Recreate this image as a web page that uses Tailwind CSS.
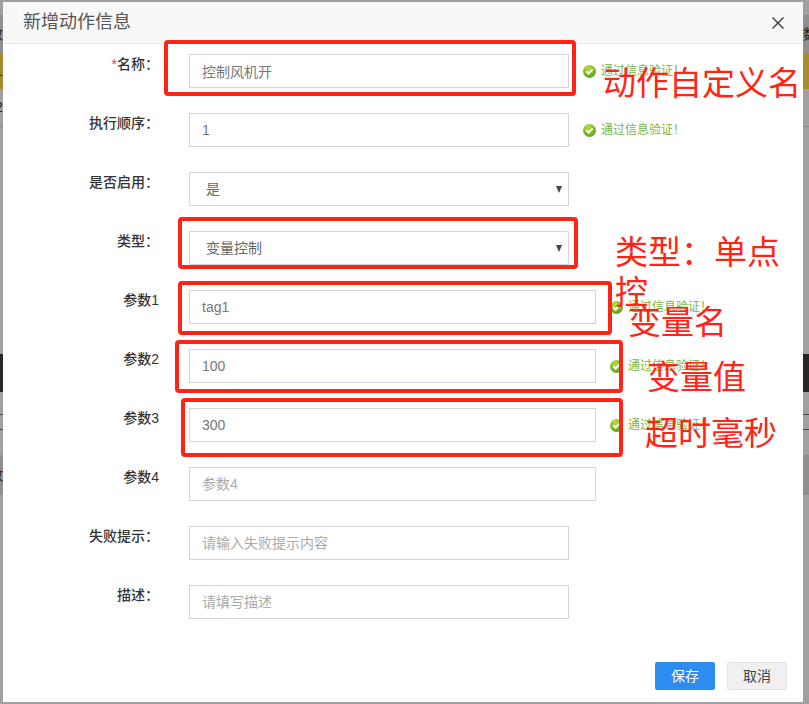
<!DOCTYPE html>
<html lang="zh-CN">
  <head>
    <meta charset="UTF-8" />
    <title>新增动作信息</title>
    <script src="https://cdn.jsdelivr.net/npm/@tailwindcss/browser@4"></script>
  </head>
  <body class="relative w-[809px] h-[704px] overflow-hidden bg-[#a0a0a0] font-['Liberation_Sans','Noto_Sans_CJK_SC',sans-serif]">
    <!-- page behind the overlay, only the edges show -->
    <div class="absolute left-0 top-[15px] w-full h-[38px] bg-[#8f8f8f]"></div>
    <div class="absolute left-0 top-[53px] w-full h-[36px] bg-[#a98a2c]"></div>
    <div class="absolute left-0 top-[126px] w-full h-px bg-[#8a8a8a]"></div>
    <div class="absolute left-0 top-[354px] w-full h-[38px] bg-[#262626]"></div>
    <div class="absolute left-0 top-[414px] w-full h-px bg-[#4a4a4a]"></div>
    <div class="absolute left-0 top-[429px] w-full h-px bg-[#4a4a4a]"></div>
    <div class="absolute left-0 top-[455px] w-full h-[40px] bg-[#8f8f8f]"></div>
    <span class="absolute left-[-11px] top-[24px] text-[14px] leading-5 text-[#222]">数</span>
    <span class="absolute left-[803px] top-[24px] text-[14px] leading-5 text-[#222]">数</span>
    <span class="absolute left-[-5px] top-[61px] text-[14px] leading-5 text-[#222]">1</span>
    <span class="absolute left-[-5px] top-[97px] text-[14px] leading-5 text-[#222]">2</span>
    <span class="absolute left-[-11px] top-[465px] text-[14px] leading-5 text-[#222]">数</span>

    <div class="relative ml-[3px] mt-[2px] w-[800px] h-[700px] bg-white">
      <header class="flex items-center justify-between h-[42px] pl-[20px] pr-[19px] bg-[#f8f8f8] border-b border-[#e8e8e8]">
        <h1 class="text-[18px] text-[#555]">新增动作信息</h1>
        <svg class="w-[12px] h-[12px]" viewBox="0 0 12 12" fill="none" stroke="#333" stroke-width="1.3"><path d="M0.5 0.5 11.5 11.5M11.5 0.5 0.5 11.5" /></svg>
      </header>

      <form class="pt-[10px] text-[14px]">
        <div class="flex h-[59px]">
          <label class="w-[156px] mr-[30px] text-right leading-5 font-medium text-[#333]"><span class="text-red-500">*</span>名称：</label>
          <input class="w-[380px] h-[34px] px-3 border border-[#d2d5dd] text-[#777]" value="控制风机开" />
          <div class="flex items-center h-[34px] ml-[14px] gap-[5px] text-[12px] text-[#7ab648]">
            <svg class="w-[13px] h-[13px]" viewBox="0 0 13 13"><defs><radialGradient id="ok" cx="0.4" cy="0.25" r="0.8"><stop offset="0" stop-color="#b4e03c" /><stop offset="1" stop-color="#5a9e1e" /></radialGradient></defs><circle cx="6.5" cy="6.5" r="6.5" fill="url(#ok)" /><path d="M3.4 6.3 5.6 8.5 9.6 4.4" fill="none" stroke="#fff" stroke-width="2" /></svg>
            <span>通过信息验证！</span>
          </div>
        </div>
        <div class="flex h-[59px]">
          <label class="w-[156px] mr-[30px] text-right leading-5 font-medium text-[#333]">执行顺序：</label>
          <input class="w-[380px] h-[34px] px-3 border border-[#d2d5dd] text-[#777]" value="1" />
          <div class="flex items-center h-[34px] ml-[14px] gap-[5px] text-[12px] text-[#7ab648]">
            <svg class="w-[13px] h-[13px]" viewBox="0 0 13 13"><circle cx="6.5" cy="6.5" r="6.5" fill="url(#ok)" /><path d="M3.4 6.3 5.6 8.5 9.6 4.4" fill="none" stroke="#fff" stroke-width="2" /></svg>
            <span>通过信息验证！</span>
          </div>
        </div>
        <div class="flex h-[59px]">
          <label class="w-[156px] mr-[30px] text-right leading-5 font-medium text-[#333]">是否启用：</label>
          <div class="flex items-center justify-between w-[380px] h-[34px] pl-[16px] pr-[5px] border border-[#d2d5dd] text-[#666]">
            <span>是</span>
            <span class="w-0 h-0 border-x-[3.5px] border-x-transparent border-t-[7px] border-t-[#444] mr-[1px]"></span>
          </div>
        </div>
        <div class="flex h-[59px]">
          <label class="w-[156px] mr-[30px] text-right leading-5 font-medium text-[#333]">类型：</label>
          <div class="flex items-center justify-between w-[380px] h-[34px] pl-[16px] pr-[5px] border border-[#d2d5dd] text-[#666]">
            <span>变量控制</span>
            <span class="w-0 h-0 border-x-[3.5px] border-x-transparent border-t-[7px] border-t-[#444] mr-[1px]"></span>
          </div>
        </div>
        <div class="flex h-[59px]">
          <label class="w-[156px] mr-[30px] text-right leading-5 font-medium text-[#333]">参数1</label>
          <input class="w-[407px] h-[34px] px-3 border border-[#d2d5dd] text-[#777]" value="tag1" />
          <div class="flex items-center h-[34px] ml-[14px] gap-[5px] text-[12px] text-[#7ab648]">
            <svg class="w-[13px] h-[13px]" viewBox="0 0 13 13"><circle cx="6.5" cy="6.5" r="6.5" fill="url(#ok)" /><path d="M3.4 6.3 5.6 8.5 9.6 4.4" fill="none" stroke="#fff" stroke-width="2" /></svg>
            <span>通过信息验证！</span>
          </div>
        </div>
        <div class="flex h-[59px]">
          <label class="w-[156px] mr-[30px] text-right leading-5 font-medium text-[#333]">参数2</label>
          <input class="w-[407px] h-[34px] px-3 border border-[#d2d5dd] text-[#777]" value="100" />
          <div class="flex items-center h-[34px] ml-[14px] gap-[5px] text-[12px] text-[#7ab648]">
            <svg class="w-[13px] h-[13px]" viewBox="0 0 13 13"><circle cx="6.5" cy="6.5" r="6.5" fill="url(#ok)" /><path d="M3.4 6.3 5.6 8.5 9.6 4.4" fill="none" stroke="#fff" stroke-width="2" /></svg>
            <span>通过信息验证！</span>
          </div>
        </div>
        <div class="flex h-[59px]">
          <label class="w-[156px] mr-[30px] text-right leading-5 font-medium text-[#333]">参数3</label>
          <input class="w-[407px] h-[34px] px-3 border border-[#d2d5dd] text-[#777]" value="300" />
          <div class="flex items-center h-[34px] ml-[14px] gap-[5px] text-[12px] text-[#7ab648]">
            <svg class="w-[13px] h-[13px]" viewBox="0 0 13 13"><circle cx="6.5" cy="6.5" r="6.5" fill="url(#ok)" /><path d="M3.4 6.3 5.6 8.5 9.6 4.4" fill="none" stroke="#fff" stroke-width="2" /></svg>
            <span>通过信息验证！</span>
          </div>
        </div>
        <div class="flex h-[59px]">
          <label class="w-[156px] mr-[30px] text-right leading-5 font-medium text-[#333]">参数4</label>
          <input class="w-[407px] h-[34px] px-3 border border-[#d2d5dd] placeholder:text-[#aaa]" placeholder="参数4" />
        </div>
        <div class="flex h-[59px]">
          <label class="w-[156px] mr-[30px] text-right leading-5 font-medium text-[#333]">失败提示：</label>
          <input class="w-[380px] h-[34px] px-3 border border-[#d2d5dd] placeholder:text-[#aaa]" placeholder="请输入失败提示内容" />
        </div>
        <div class="flex h-[59px]">
          <label class="w-[156px] mr-[30px] text-right leading-5 font-medium text-[#333]">描述：</label>
          <input class="w-[380px] h-[34px] px-3 border border-[#d2d5dd] placeholder:text-[#aaa]" placeholder="请填写描述" />
        </div>
        <div class="flex justify-end gap-3 pr-4 mt-[18px]">
          <button type="button" class="w-[60px] h-[28px] rounded-[2px] bg-[#2d8cf0] text-[14px] text-white">保存</button>
          <button type="button" class="w-[60px] h-[28px] rounded-[2px] bg-[#f0f0f0] border border-[#e2e2e2] text-[14px] text-[#444]">取消</button>
        </div>
      </form>

      <!-- hand-drawn annotations on top of the screenshot (coordinates relative to the modal) -->
      <div class="absolute left-[161px] top-[38px] w-[412px] h-[56px] border-4 border-[#ff2416] rounded-[4px]"></div>
      <div class="absolute left-[175px] top-[215px] w-[400px] h-[52px] border-4 border-[#ff2416] rounded-[4px]"></div>
      <div class="absolute left-[175px] top-[279px] w-[434px] h-[54px] border-4 border-[#ff2416] rounded-[4px]"></div>
      <div class="absolute left-[172px] top-[338px] w-[448px] h-[53px] border-4 border-[#ff2416] rounded-[4px]"></div>
      <div class="absolute left-[178px] top-[396px] w-[442px] h-[59px] border-4 border-[#ff2416] rounded-[4px]"></div>

      <p class="absolute left-[600px] top-[60px] whitespace-nowrap text-[33px] leading-[44px] text-[#ff2416]">动作自定义名</p>
      <p class="absolute left-[612px] top-[231px] w-[170px] text-[33px] leading-[40px] text-[#ff2416]">类型：单点控</p>
      <p class="absolute left-[625px] top-[299px] whitespace-nowrap text-[33px] leading-[44px] text-[#ff2416]">变量名</p>
      <p class="absolute left-[644px] top-[354px] whitespace-nowrap text-[33px] leading-[44px] text-[#ff2416]">变量值</p>
      <p class="absolute left-[642px] top-[410px] whitespace-nowrap text-[33px] leading-[44px] text-[#ff2416]">超时毫秒</p>
    </div>
  </body>
</html>
